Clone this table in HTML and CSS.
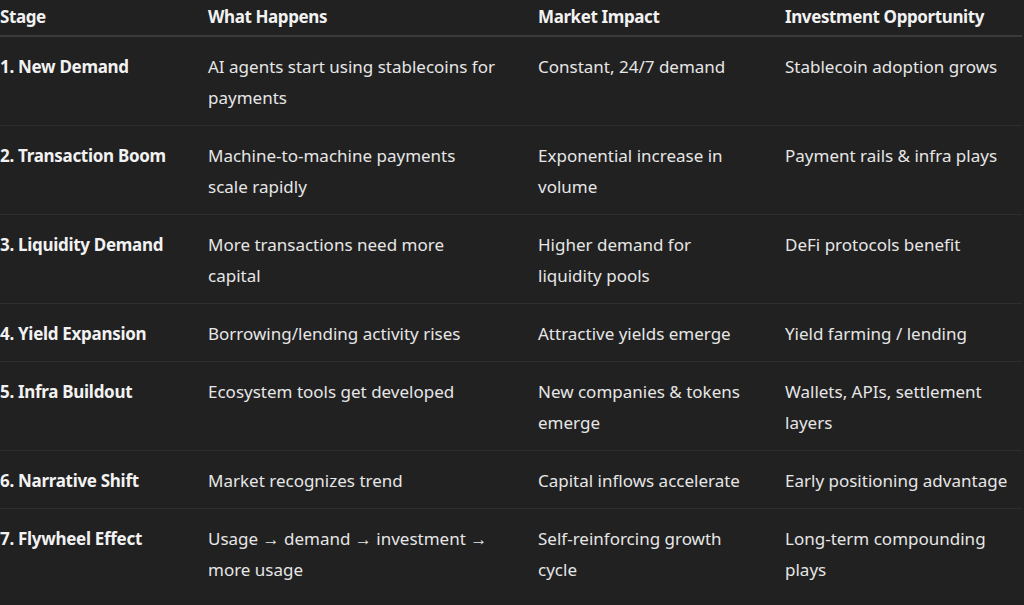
FILE: index.html
```html
<!DOCTYPE html>
<html lang="en">
<head>
<meta charset="utf-8">
<title>AI Agent Stablecoin Flywheel</title>
<link rel="stylesheet" href="styles.css">
</head>
<body>
<table class="stages">
  <colgroup>
    <col class="c1"><col class="c2"><col class="c3"><col class="c4">
  </colgroup>
  <thead>
    <tr><th>Stage</th><th class="w2">What Happens</th><th class="w3">Market Impact</th><th class="w4">Investment Opportunity</th></tr>
  </thead>
  <tbody>
    <tr><td class="stage">1. New Demand</td><td class="w2">AI agents start using stablecoins for payments</td><td class="w3">Constant, 24/7 demand</td><td class="w4">Stablecoin adoption grows</td></tr>
    <tr><td class="stage">2. Transaction Boom</td><td class="w2">Machine-to-machine payments scale rapidly</td><td class="w3">Exponential increase in volume</td><td class="w4">Payment rails &amp; infra plays</td></tr>
    <tr><td class="stage">3. Liquidity Demand</td><td class="w2">More transactions need more capital</td><td class="w3">Higher demand for liquidity pools</td><td class="w4">DeFi protocols benefit</td></tr>
    <tr><td class="stage">4. Yield Expansion</td><td class="w2">Borrowing/lending activity rises</td><td class="w3">Attractive yields emerge</td><td class="w4">Yield farming / lending</td></tr>
    <tr><td class="stage">5. Infra Buildout</td><td class="w2">Ecosystem tools get developed</td><td class="w3">New companies &amp; tokens emerge</td><td class="w4">Wallets, APIs, settlement layers</td></tr>
    <tr><td class="stage">6. Narrative Shift</td><td class="w2">Market recognizes trend</td><td class="w3">Capital inflows accelerate</td><td class="w4">Early positioning advantage</td></tr>
    <tr><td class="stage">7. Flywheel Effect</td><td class="w2">Usage → demand → investment → more usage</td><td class="w3">Self-reinforcing growth cycle</td><td class="w4">Long-term compounding plays</td></tr>
  </tbody>
</table>
</body>
</html>
```
FILE: styles.css
```css
html, body {
  margin: 0;
  background: #212121;
}
body {
  font-family: "Noto Sans", "Open Sans", sans-serif;
  font-size: 17px;
  color: #e6e6e6;
  overflow: hidden;
}
.stages {
  width: 1022px;
  border-collapse: collapse;
  table-layout: fixed;
}
.c1 { width: 208px; }
.c2 { width: 330px; }
.c3 { width: 247px; }
.c4 { width: 237px; }
.stages th,
.stages td {
  text-align: left;
  line-height: 31px;
  padding-left: 0;
  padding-right: 16px;
}
.stages th {
  font-weight: 700;
  letter-spacing: -0.4px;
  color: #f2f2f2;
  padding-top: 1px;
  padding-bottom: 3px;
  border-bottom: 2px solid #3a3a3a;
}
.stages td {
  vertical-align: top;
  padding-top: 14px;
  padding-bottom: 12px;
  border-bottom: 1px solid #2e2e2e;
}
.stages .w2 { padding-right: 41px; }
.stages .w3 { padding-right: 37px; }
.stages .w4 { padding-right: 7px; }
.stages tbody tr:last-child td {
  border-bottom: none;
}
.stages td.stage {
  font-weight: 700;
  letter-spacing: -0.3px;
  color: #f2f2f2;
}
```
